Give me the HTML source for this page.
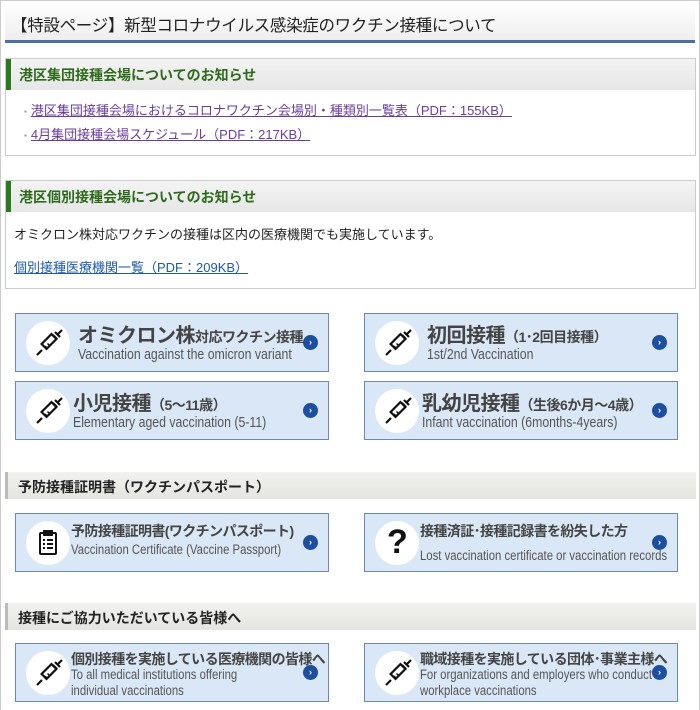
<!DOCTYPE html>
<html><head><meta charset="utf-8"><style>
*{margin:0;padding:0;box-sizing:border-box}
body{width:700px;height:710px;overflow:hidden;background:#fff;font-family:"Liberation Sans","Noto Sans CJK JP",sans-serif;position:relative}
.frame{position:absolute;left:0;top:0;width:700px;height:710px;border:1px solid #ccc;border-bottom:none}
.title{position:absolute;left:5px;top:3px;width:690px;height:40px;background:linear-gradient(#fff,#eee);border-bottom:3px solid #4d6fa8;font-size:16.5px;color:#222;padding:9px 0 0 6px;letter-spacing:-0.3px}
.box{position:absolute;left:5px;width:691px;border:1px solid #ccc}
.bh{height:31px;background:linear-gradient(#f4f4f4,#e6e6e6);border-left:5px solid #2c7a1f;color:#2c6a1a;font-weight:bold;font-size:14px;padding:6px 0 0 8px}
.box ul{list-style:none;padding:10px 0 0 18px;font-size:13px}
.box li{margin-bottom:5px}
.box li:before{content:"▪";color:#999;font-size:8px;margin-right:4px;vertical-align:middle}
a{color:#6a3d9a;text-decoration:underline}
.sh{position:absolute;left:5px;width:691px;height:27px;background:linear-gradient(#f2f2f0,#e4e4e0);border-left:3px solid #bbb;font-size:14px;color:#222;padding:5px 0 0 10px;font-weight:bold}
.btn{position:absolute;width:314px;height:59px;background:#dae7f6;border:1px solid #6d87b8}
.ic{position:absolute;left:10px;top:7px;width:44px;height:44px;border-radius:50%;background:#fff}
.ic svg{position:absolute;left:7px;top:7px}
.t1{position:absolute;left:62px;top:5px;font-size:20px;font-weight:bold;color:#444;white-space:nowrap;letter-spacing:-0.5px}
.t1 small{font-size:14px}
.t2{position:absolute;left:62px;top:32px;font-size:15px;color:#555;white-space:nowrap;transform:scaleX(0.82);transform-origin:left top}
.m1{position:absolute;left:55px;top:7px;font-size:14px;font-weight:bold;color:#444;white-space:nowrap;letter-spacing:-0.6px}
.m2{position:absolute;left:55px;top:28px;font-size:13.5px;color:#555;white-space:nowrap;line-height:16px;transform:scaleX(0.84);transform-origin:left top}
.ar{position:absolute;right:10px;top:21px;width:15px;height:15px;border-radius:50%;background:#1c4fa0;color:#fff;font-size:9px;text-align:center;line-height:15px;font-weight:bold}
</style></head><body>
<div class="frame"></div>
<div class="title">【特設ページ】新型コロナウイルス感染症のワクチン接種について</div>
<div class="box" style="top:58px;height:98px"><div class="bh">港区集団接種会場についてのお知らせ</div>
<ul><li><a>港区集団接種会場におけるコロナワクチン会場別・種類別一覧表（PDF：155KB）</a></li><li><a>4月集団接種会場スケジュール（PDF：217KB）</a></li></ul></div>
<div class="box" style="top:180px;height:109px"><div class="bh">港区個別接種会場についてのお知らせ</div>
<div style="font-size:13px;color:#222;padding:12px 0 0 8px">オミクロン株対応ワクチンの接種は区内の医療機関でも実施しています。</div>
<div style="font-size:13px;padding:14px 0 0 8px"><a style="color:#1d5aa8">個別接種医療機関一覧（PDF：209KB）</a></div></div>

<svg width="0" height="0" style="position:absolute"><defs><g id="sy" fill="none" stroke="#111" stroke-width="2.2"><path d="M4 27 L9 22"/><rect x="9" y="10" width="14" height="7" transform="rotate(-45 16 13.5)"/><path d="M20 7 L24 11 M22 4 L27 9 M24.5 6.5 L29 2"/><path d="M12 18 l2 2 M14.5 15.5 l2 2" stroke-width="1.5"/></g></defs></svg>

<div class="btn" style="left:15px;top:313px"><div class="ic"><svg width="30" height="30"><use href="#sy"/></svg></div><div class="t1">オミクロン株<small>対応ワクチン接種</small></div><div class="t2">Vaccination against the omicron variant</div><div class="ar">›</div></div>
<div class="btn" style="left:364px;top:313px"><div class="ic"><svg width="30" height="30"><use href="#sy"/></svg></div><div class="t1">初回接種<small>（1･2回目接種）</small></div><div class="t2">1st/2nd Vaccination</div><div class="ar">›</div></div>
<div class="btn" style="left:15px;top:381px"><div class="ic"><svg width="30" height="30"><use href="#sy"/></svg></div><div class="t1" style="left:57px">小児接種<small>（5〜11歳）</small></div><div class="t2" style="left:57px">Elementary aged vaccination (5-11)</div><div class="ar">›</div></div>
<div class="btn" style="left:364px;top:381px"><div class="ic"><svg width="30" height="30"><use href="#sy"/></svg></div><div class="t1" style="left:57px">乳幼児接種<small>（生後6か月〜4歳）</small></div><div class="t2" style="left:57px">Infant vaccination (6months-4years)</div><div class="ar">›</div></div>

<div class="sh" style="top:472px">予防接種証明書（ワクチンパスポート）</div>
<div class="btn" style="left:15px;top:513px"><div class="ic"><svg width="30" height="30" fill="none" stroke="#111" stroke-width="2"><rect x="7" y="5" width="16" height="21" rx="1"/><rect x="11" y="3" width="8" height="4" fill="#111"/><path d="M10 12h2M14 12h6M10 16h2M14 16h6M10 20h2M14 20h6"/></svg></div><div class="m1">予防接種証明書(ワクチンパスポート)</div><div class="m2">Vaccination Certificate (Vaccine Passport)</div><div class="ar">›</div></div>
<div class="btn" style="left:364px;top:513px"><div class="ic"><span style="position:absolute;left:12px;top:2px;font-size:34px;font-weight:bold;color:#111">?</span></div><div class="m1">接種済証･接種記録書を紛失した方</div><div class="m2" style="top:34px">Lost vaccination certificate or vaccination records</div><div class="ar">›</div></div>

<div class="sh" style="top:603px">接種にご協力いただいている皆様へ</div>
<div class="btn" style="left:15px;top:643px"><div class="ic"><svg width="30" height="30"><use href="#sy"/></svg></div><div class="m1" style="top:5px">個別接種を実施している医療機関の皆様へ</div><div class="m2" style="top:23px">To all medical institutions offering<br>individual vaccinations</div><div class="ar">›</div></div>
<div class="btn" style="left:364px;top:643px"><div class="ic"><svg width="30" height="30"><use href="#sy"/></svg></div><div class="m1" style="top:5px">職域接種を実施している団体･事業主様へ</div><div class="m2" style="top:23px">For organizations and employers who conduct<br>workplace vaccinations</div><div class="ar">›</div></div>
</body></html>
